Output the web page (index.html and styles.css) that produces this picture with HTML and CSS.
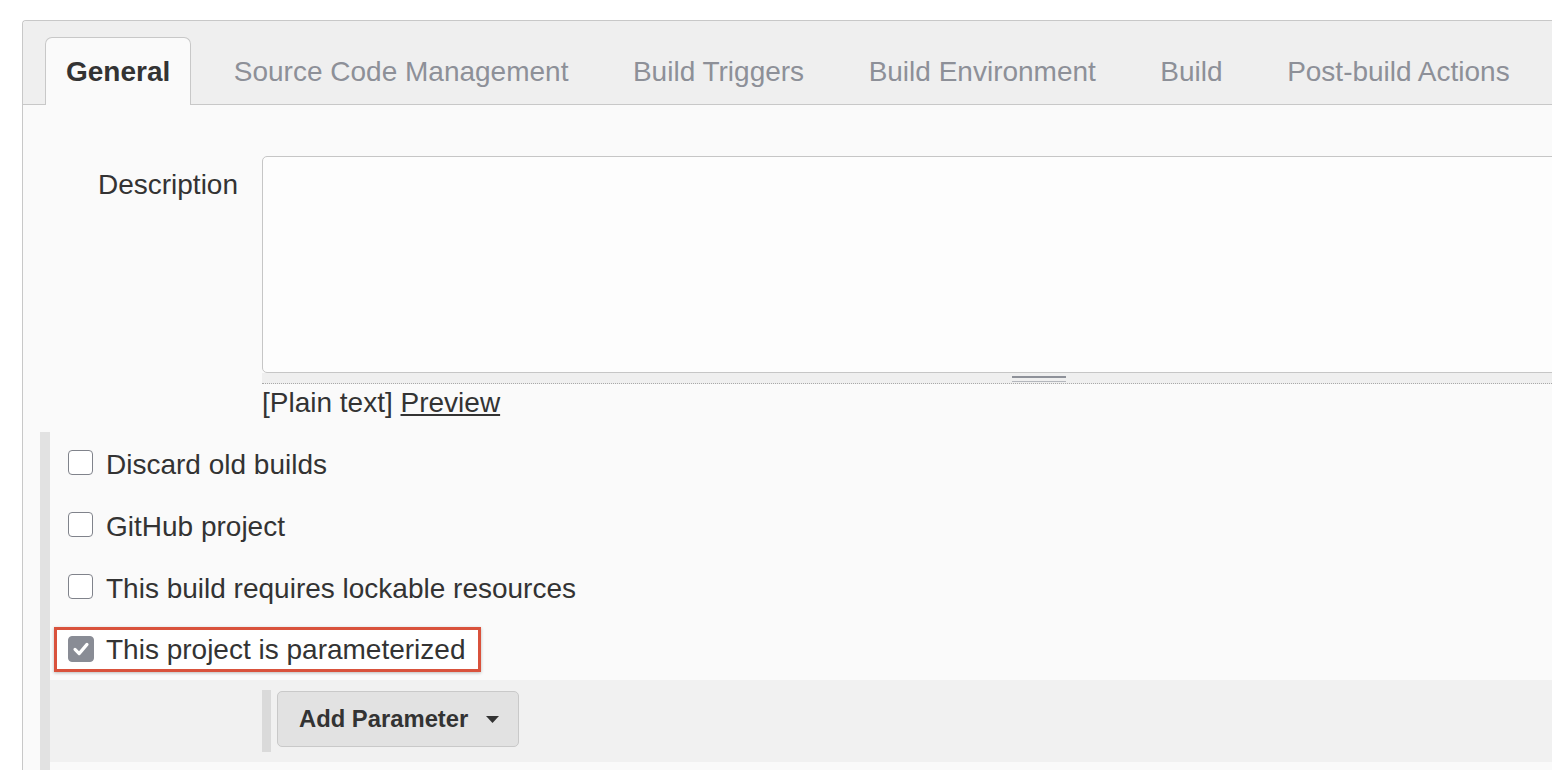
FILE: index.html
```html
<!DOCTYPE html>
<html lang="en">
<head>
<meta charset="utf-8">
<title>General</title>
<link rel="stylesheet" href="styles.css">
</head>
<body>
<div class="page">
  <div class="config">
    <div class="tabbar">
      <div class="tab active">General</div>
      <div class="tab">Source Code Management</div>
      <div class="tab">Build Triggers</div>
      <div class="tab">Build Environment</div>
      <div class="tab">Build</div>
      <div class="tab">Post-build Actions</div>
    </div>
    <div class="section">
      <div class="desc-row">
        <div class="desc-label">Description</div>
        <div class="desc-field">
          <div class="textarea"></div>
          <div class="grip-bar"><span class="grip"></span></div>
          <div class="markup">[Plain text] <a class="preview" href="#">Preview</a></div>
        </div>
      </div>
      <div class="options">
        <div class="opt"><span class="cb"></span><span class="opt-label">Discard old builds</span></div>
        <div class="opt"><span class="cb"></span><span class="opt-label">GitHub project</span></div>
        <div class="opt"><span class="cb"></span><span class="opt-label">This build requires lockable resources</span></div>
        <div class="opt opt-highlighted">
          <div class="highlight">
            <span class="cb checked"><svg width="26" height="26" viewBox="0 0 26 26"><polyline points="6.5,13.5 11,18 19.5,8" fill="none" stroke="#fff" stroke-width="3.4" stroke-linecap="round" stroke-linejoin="round"/></svg></span>
            <span class="opt-label">This project is parameterized</span>
          </div>
        </div>
        <div class="nested">
          <div class="nested-inner">
            <span class="handle"></span>
            <button class="add-btn" type="button"><span>Add Parameter</span><svg width="13" height="8" viewBox="0 0 13 8"><polygon points="0,0 13,0 6.5,7" fill="#333"/></svg></button>
          </div>
        </div>
      </div>
    </div>
  </div>
</div>
</body>
</html>
```
FILE: styles.css
```css
html, body {
  margin: 0;
  padding: 0;
  background: #ffffff;
  overflow: hidden;
}

body {
  font-family: "Liberation Sans", Arial, Helvetica, sans-serif;
  color: #333333;
  font-size: 28px;
}

.page {
  padding: 20px 0 0 22px;
  width: 1960px;
}

.config {
  width: 1900px;
  min-height: 760px;
  border-top: 1px solid #c8c8c8;
  border-left: 1px solid #c8c8c8;
  border-top-left-radius: 4px;
  background: #fafafa;
}

.tabbar {
  height: 84px;
  box-sizing: border-box;
  display: flex;
  align-items: flex-end;
  padding-left: 22px;
  background: #efefef;
  border-bottom: 1px solid #c8c8c8;
  border-top-left-radius: 4px;
}

.tab {
  height: 68px;
  box-sizing: border-box;
  margin-bottom: -1px;
  margin-right: 20.5px;
  padding: 0 21px;
  border: 1px solid transparent;
  border-bottom: 0;
  display: flex;
  align-items: center;
  font-size: 28px;
  line-height: 32px;
  padding-top: 1px;
  color: #8d9098;
  white-space: nowrap;
}

.tab.active {
  background: #fafafa;
  border-color: #c8c8c8;
  border-radius: 7px 7px 0 0;
  color: #333333;
  font-weight: bold;
  padding-left: 20px;
  padding-right: 20px;
}

.section {
  padding-top: 51px;
}

.desc-row {
  display: flex;
  align-items: flex-start;
}

.desc-label {
  width: 215px;
  margin-right: 24px;
  text-align: right;
  padding-top: 9px;
  line-height: 40px;
  font-size: 28px;
}

.desc-field {
  width: 1554px;
}

.textarea {
  height: 217px;
  box-sizing: border-box;
  border: 1px solid #c6c6c6;
  border-radius: 5px;
  background: #fdfdfd;
}

.grip-bar {
  height: 11px;
  box-sizing: border-box;
  background: #efefef;
  border-bottom: 1px dotted #a8a8a8;
  display: flex;
  justify-content: center;
  align-items: flex-start;
}

.grip {
  width: 54px;
  height: 3px;
  margin-top: 3px;
  border-top: 2px solid #8e9199;
  border-bottom: 1px solid #b4b7bd;
}

.markup {
  margin-top: 3px;
  line-height: 32px;
  font-size: 28px;
}

.preview {
  color: #333333;
  text-decoration: underline;
}

.options {
  margin-top: 13px;
  margin-left: 17px;
  border-left: 10px solid #e2e2e2;
  padding-bottom: 40px;
}

.opt {
  height: 62px;
  display: flex;
  align-items: center;
  padding-left: 18px;
}

.opt-label {
  line-height: 32px;
  font-size: 28px;
  white-space: nowrap;
  padding-top: 3px;
}

.cb {
  width: 25px;
  height: 25px;
  box-sizing: border-box;
  border: 1.5px solid #80838b;
  border-radius: 4px;
  background: #ffffff;
  margin-right: 13px;
  margin-bottom: 2px;
  flex: none;
  display: flex;
  align-items: center;
  justify-content: center;
}

.cb.checked {
  width: 26px;
  height: 26px;
  background: #898c95;
  border-color: #898c95;
  margin-right: 12px;
  margin-bottom: 0;
}

.cb.checked svg {
  display: block;
}

.opt-highlighted {
  padding-left: 4px;
}

.highlight {
  display: flex;
  align-items: center;
  border: 3px solid #d9523c;
  padding: 2px 13px 3px 11px;
  background: #ffffff;
  box-shadow: 0 1px 3px rgba(0, 0, 0, 0.25);
}

.highlight .opt-label {
  padding-top: 2px;
}

.nested {
  height: 82px;
  box-sizing: border-box;
  padding-top: 10px;
  background: #f1f1f1;
}

.nested-inner {
  display: flex;
  align-items: flex-start;
  margin-left: 212px;
}

.handle {
  width: 9px;
  height: 62px;
  background: #dadada;
}

.add-btn {
  margin-left: 6px;
  margin-top: 1px;
  height: 56px;
  box-sizing: border-box;
  border: 1px solid #c9c9c9;
  border-radius: 5px;
  background: #e2e2e2;
  font-family: "Liberation Sans", Arial, Helvetica, sans-serif;
  font-weight: bold;
  font-size: 23.8px;
  color: #333333;
  padding: 0 19px 0 21px;
  display: flex;
  align-items: center;
  gap: 18px;
  white-space: nowrap;
}

.add-btn svg {
  display: block;
  margin-top: 2px;
}
```
